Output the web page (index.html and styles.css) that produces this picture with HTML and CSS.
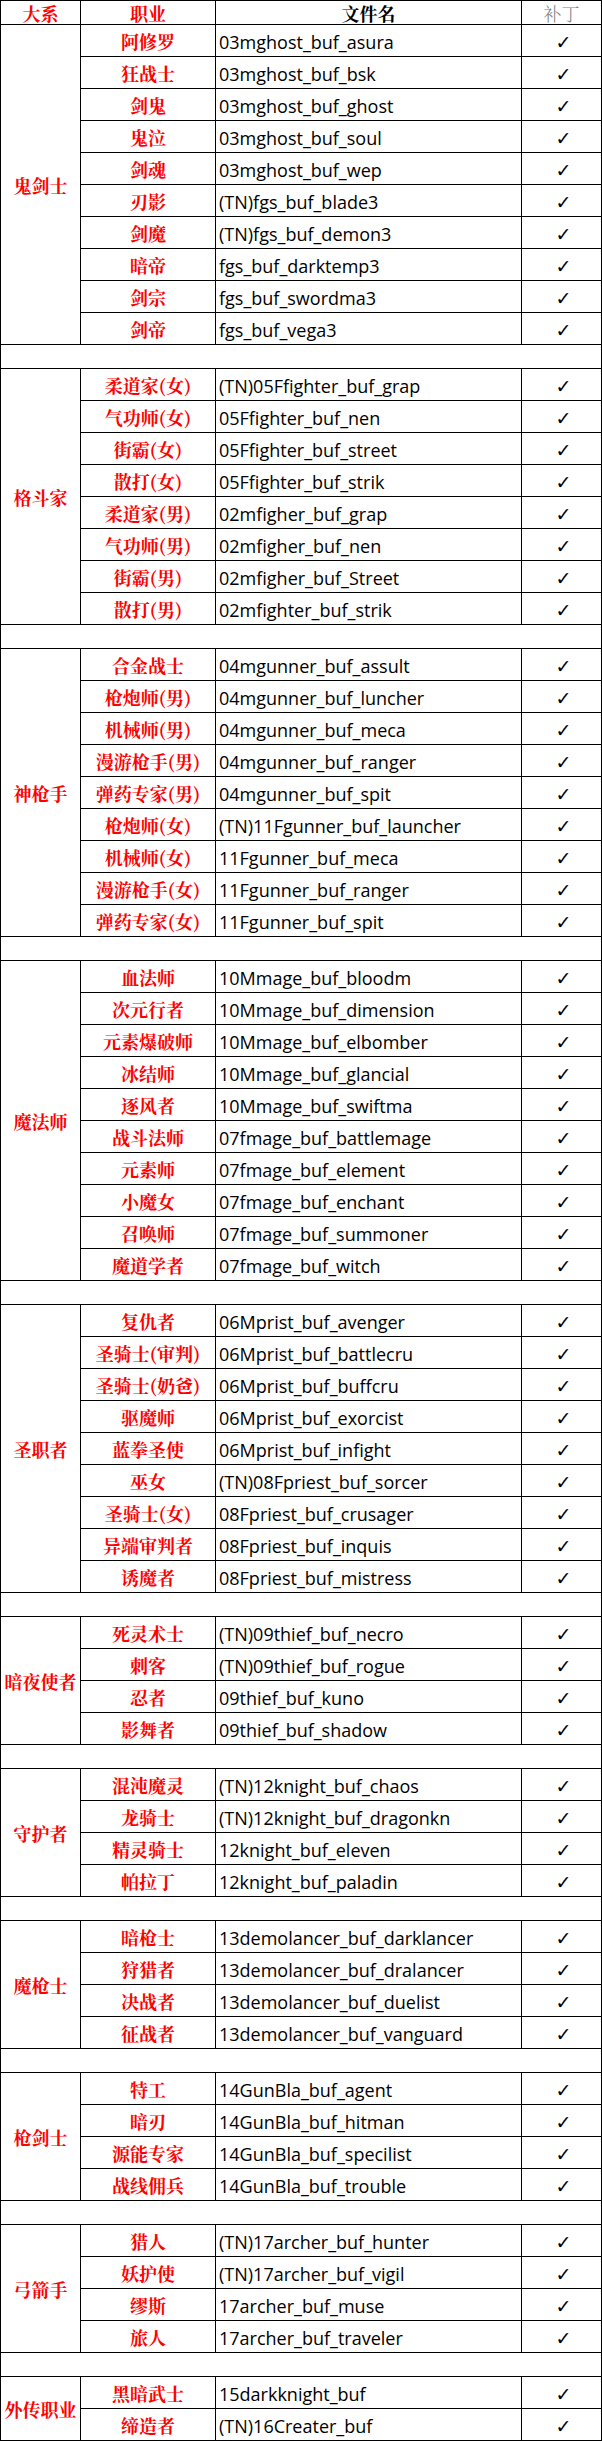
FILE: index.html
```html
<!DOCTYPE html>
<html lang="zh-CN">
<head>
<meta charset="utf-8">
<title>补丁列表</title>
<link rel="stylesheet" href="styles.css">
</head>
<body>
<table class="grid">
<colgroup><col class="c1"><col class="c2"><col class="c3"><col class="c4"></colgroup>
<tbody>
<tr class="hd"><td class="red">大系</td><td class="red">职业</td><td class="blk">文件名</td><td class="gray">补丁</td></tr>

<tr class="r"><td class="grp" rowspan="10">鬼剑士</td><td class="job">阿修罗</td><td class="file">03mghost_buf_asura</td><td class="ck">✓</td></tr>
<tr class="r"><td class="job">狂战士</td><td class="file">03mghost_buf_bsk</td><td class="ck">✓</td></tr>
<tr class="r"><td class="job">剑鬼</td><td class="file">03mghost_buf_ghost</td><td class="ck">✓</td></tr>
<tr class="r"><td class="job">鬼泣</td><td class="file">03mghost_buf_soul</td><td class="ck">✓</td></tr>
<tr class="r"><td class="job">剑魂</td><td class="file">03mghost_buf_wep</td><td class="ck">✓</td></tr>
<tr class="r"><td class="job">刃影</td><td class="file">(TN)fgs_buf_blade3</td><td class="ck">✓</td></tr>
<tr class="r"><td class="job">剑魔</td><td class="file">(TN)fgs_buf_demon3</td><td class="ck">✓</td></tr>
<tr class="r"><td class="job">暗帝</td><td class="file">fgs_buf_darktemp3</td><td class="ck">✓</td></tr>
<tr class="r"><td class="job">剑宗</td><td class="file">fgs_buf_swordma3</td><td class="ck">✓</td></tr>
<tr class="r"><td class="job">剑帝</td><td class="file">fgs_buf_vega3</td><td class="ck">✓</td></tr>
<tr class="sp"><td colspan="4"></td></tr>

<tr class="r"><td class="grp" rowspan="8">格斗家</td><td class="job">柔道家(女)</td><td class="file">(TN)05Ffighter_buf_grap</td><td class="ck">✓</td></tr>
<tr class="r"><td class="job">气功师(女)</td><td class="file">05Ffighter_buf_nen</td><td class="ck">✓</td></tr>
<tr class="r"><td class="job">街霸(女)</td><td class="file">05Ffighter_buf_street</td><td class="ck">✓</td></tr>
<tr class="r"><td class="job">散打(女)</td><td class="file">05Ffighter_buf_strik</td><td class="ck">✓</td></tr>
<tr class="r"><td class="job">柔道家(男)</td><td class="file">02mfigher_buf_grap</td><td class="ck">✓</td></tr>
<tr class="r"><td class="job">气功师(男)</td><td class="file">02mfigher_buf_nen</td><td class="ck">✓</td></tr>
<tr class="r"><td class="job">街霸(男)</td><td class="file">02mfigher_buf_Street</td><td class="ck">✓</td></tr>
<tr class="r"><td class="job">散打(男)</td><td class="file">02mfighter_buf_strik</td><td class="ck">✓</td></tr>
<tr class="sp"><td colspan="4"></td></tr>

<tr class="r"><td class="grp" rowspan="9">神枪手</td><td class="job">合金战士</td><td class="file">04mgunner_buf_assult</td><td class="ck">✓</td></tr>
<tr class="r"><td class="job">枪炮师(男)</td><td class="file">04mgunner_buf_luncher</td><td class="ck">✓</td></tr>
<tr class="r"><td class="job">机械师(男)</td><td class="file">04mgunner_buf_meca</td><td class="ck">✓</td></tr>
<tr class="r"><td class="job">漫游枪手(男)</td><td class="file">04mgunner_buf_ranger</td><td class="ck">✓</td></tr>
<tr class="r"><td class="job">弹药专家(男)</td><td class="file">04mgunner_buf_spit</td><td class="ck">✓</td></tr>
<tr class="r"><td class="job">枪炮师(女)</td><td class="file">(TN)11Fgunner_buf_launcher</td><td class="ck">✓</td></tr>
<tr class="r"><td class="job">机械师(女)</td><td class="file">11Fgunner_buf_meca</td><td class="ck">✓</td></tr>
<tr class="r"><td class="job">漫游枪手(女)</td><td class="file">11Fgunner_buf_ranger</td><td class="ck">✓</td></tr>
<tr class="r"><td class="job">弹药专家(女)</td><td class="file">11Fgunner_buf_spit</td><td class="ck">✓</td></tr>
<tr class="sp"><td colspan="4"></td></tr>

<tr class="r"><td class="grp" rowspan="10">魔法师</td><td class="job">血法师</td><td class="file">10Mmage_buf_bloodm</td><td class="ck">✓</td></tr>
<tr class="r"><td class="job">次元行者</td><td class="file">10Mmage_buf_dimension</td><td class="ck">✓</td></tr>
<tr class="r"><td class="job">元素爆破师</td><td class="file">10Mmage_buf_elbomber</td><td class="ck">✓</td></tr>
<tr class="r"><td class="job">冰结师</td><td class="file">10Mmage_buf_glancial</td><td class="ck">✓</td></tr>
<tr class="r"><td class="job">逐风者</td><td class="file">10Mmage_buf_swiftma</td><td class="ck">✓</td></tr>
<tr class="r"><td class="job">战斗法师</td><td class="file">07fmage_buf_battlemage</td><td class="ck">✓</td></tr>
<tr class="r"><td class="job">元素师</td><td class="file">07fmage_buf_element</td><td class="ck">✓</td></tr>
<tr class="r"><td class="job">小魔女</td><td class="file">07fmage_buf_enchant</td><td class="ck">✓</td></tr>
<tr class="r"><td class="job">召唤师</td><td class="file">07fmage_buf_summoner</td><td class="ck">✓</td></tr>
<tr class="r"><td class="job">魔道学者</td><td class="file">07fmage_buf_witch</td><td class="ck">✓</td></tr>
<tr class="sp"><td colspan="4"></td></tr>

<tr class="r"><td class="grp" rowspan="9">圣职者</td><td class="job">复仇者</td><td class="file">06Mprist_buf_avenger</td><td class="ck">✓</td></tr>
<tr class="r"><td class="job">圣骑士(审判)</td><td class="file">06Mprist_buf_battlecru</td><td class="ck">✓</td></tr>
<tr class="r"><td class="job">圣骑士(奶爸)</td><td class="file">06Mprist_buf_buffcru</td><td class="ck">✓</td></tr>
<tr class="r"><td class="job">驱魔师</td><td class="file">06Mprist_buf_exorcist</td><td class="ck">✓</td></tr>
<tr class="r"><td class="job">蓝拳圣使</td><td class="file">06Mprist_buf_infight</td><td class="ck">✓</td></tr>
<tr class="r"><td class="job">巫女</td><td class="file">(TN)08Fpriest_buf_sorcer</td><td class="ck">✓</td></tr>
<tr class="r"><td class="job">圣骑士(女)</td><td class="file">08Fpriest_buf_crusager</td><td class="ck">✓</td></tr>
<tr class="r"><td class="job">异端审判者</td><td class="file">08Fpriest_buf_inquis</td><td class="ck">✓</td></tr>
<tr class="r"><td class="job">诱魔者</td><td class="file">08Fpriest_buf_mistress</td><td class="ck">✓</td></tr>
<tr class="sp"><td colspan="4"></td></tr>

<tr class="r"><td class="grp" rowspan="4">暗夜使者</td><td class="job">死灵术士</td><td class="file">(TN)09thief_buf_necro</td><td class="ck">✓</td></tr>
<tr class="r"><td class="job">刺客</td><td class="file">(TN)09thief_buf_rogue</td><td class="ck">✓</td></tr>
<tr class="r"><td class="job">忍者</td><td class="file">09thief_buf_kuno</td><td class="ck">✓</td></tr>
<tr class="r"><td class="job">影舞者</td><td class="file">09thief_buf_shadow</td><td class="ck">✓</td></tr>
<tr class="sp"><td colspan="4"></td></tr>

<tr class="r"><td class="grp" rowspan="4">守护者</td><td class="job">混沌魔灵</td><td class="file">(TN)12knight_buf_chaos</td><td class="ck">✓</td></tr>
<tr class="r"><td class="job">龙骑士</td><td class="file">(TN)12knight_buf_dragonkn</td><td class="ck">✓</td></tr>
<tr class="r"><td class="job">精灵骑士</td><td class="file">12knight_buf_eleven</td><td class="ck">✓</td></tr>
<tr class="r"><td class="job">帕拉丁</td><td class="file">12knight_buf_paladin</td><td class="ck">✓</td></tr>
<tr class="sp"><td colspan="4"></td></tr>

<tr class="r"><td class="grp" rowspan="4">魔枪士</td><td class="job">暗枪士</td><td class="file">13demolancer_buf_darklancer</td><td class="ck">✓</td></tr>
<tr class="r"><td class="job">狩猎者</td><td class="file">13demolancer_buf_dralancer</td><td class="ck">✓</td></tr>
<tr class="r"><td class="job">决战者</td><td class="file">13demolancer_buf_duelist</td><td class="ck">✓</td></tr>
<tr class="r"><td class="job">征战者</td><td class="file">13demolancer_buf_vanguard</td><td class="ck">✓</td></tr>
<tr class="sp"><td colspan="4"></td></tr>

<tr class="r"><td class="grp" rowspan="4">枪剑士</td><td class="job">特工</td><td class="file">14GunBla_buf_agent</td><td class="ck">✓</td></tr>
<tr class="r"><td class="job">暗刃</td><td class="file">14GunBla_buf_hitman</td><td class="ck">✓</td></tr>
<tr class="r"><td class="job">源能专家</td><td class="file">14GunBla_buf_specilist</td><td class="ck">✓</td></tr>
<tr class="r"><td class="job">战线佣兵</td><td class="file">14GunBla_buf_trouble</td><td class="ck">✓</td></tr>
<tr class="sp"><td colspan="4"></td></tr>

<tr class="r"><td class="grp" rowspan="4">弓箭手</td><td class="job">猎人</td><td class="file">(TN)17archer_buf_hunter</td><td class="ck">✓</td></tr>
<tr class="r"><td class="job">妖护使</td><td class="file">(TN)17archer_buf_vigil</td><td class="ck">✓</td></tr>
<tr class="r"><td class="job">缪斯</td><td class="file">17archer_buf_muse</td><td class="ck">✓</td></tr>
<tr class="r"><td class="job">旅人</td><td class="file">17archer_buf_traveler</td><td class="ck">✓</td></tr>
<tr class="sp"><td colspan="4"></td></tr>

<tr class="r"><td class="grp" rowspan="2">外传职业</td><td class="job">黑暗武士</td><td class="file">15darkknight_buf</td><td class="ck">✓</td></tr>
<tr class="r"><td class="job">缔造者</td><td class="file">(TN)16Creater_buf</td><td class="ck">✓</td></tr>
</tbody>
</table>
</body>
</html>
```
FILE: styles.css
```css
html, body {
  margin: 0;
  padding: 0;
  background: #ffffff;
}

.grid {
  border-collapse: collapse;
  table-layout: fixed;
  width: 601px;
}

.c1 { width: 80px; }
.c2 { width: 135px; }
.c3 { width: 306px; }
.c4 { width: 80px; }

.grid td {
  border: 1px solid #000000;
  padding: 0;
  vertical-align: middle;
  white-space: nowrap;
  overflow: hidden;
}

.hd { height: 24px; }
.r { height: 32px; }
.sp { height: 24px; }

.hd td {
  text-align: center;
  font-size: 18px;
  line-height: 22px;
}

.red, .grp, .job {
  color: #ff0000;
  font-family: "Noto Serif CJK SC", "Source Han Serif SC", "AR PL UMing CN", "Noto Sans CJK SC", serif;
  font-weight: bold;
}

.blk {
  color: #000000;
  font-family: "Noto Serif CJK SC", "Source Han Serif SC", "AR PL UMing CN", "Noto Sans CJK SC", serif;
  font-weight: bold;
}

.gray {
  color: #808080;
  font-family: "Noto Serif CJK SC", "Source Han Serif SC", "AR PL UMing CN", "Noto Sans CJK SC", serif;
  font-weight: 300;
}

.grp, .job {
  text-align: center;
  font-size: 18px;
  line-height: 22px;
}

.file {
  font-family: "Open Sans", "Noto Sans", sans-serif;
  font-size: 18px;
  line-height: 22px;
  color: #000000;
  padding-left: 3px !important;
  padding-top: 2px !important;
}

.ck {
  text-align: center;
  font-family: "DejaVu Sans", sans-serif;
  font-size: 19px;
  font-weight: bold;
  color: #000000;
  padding-left: 4px !important;
  padding-top: 2px !important;
}
```
